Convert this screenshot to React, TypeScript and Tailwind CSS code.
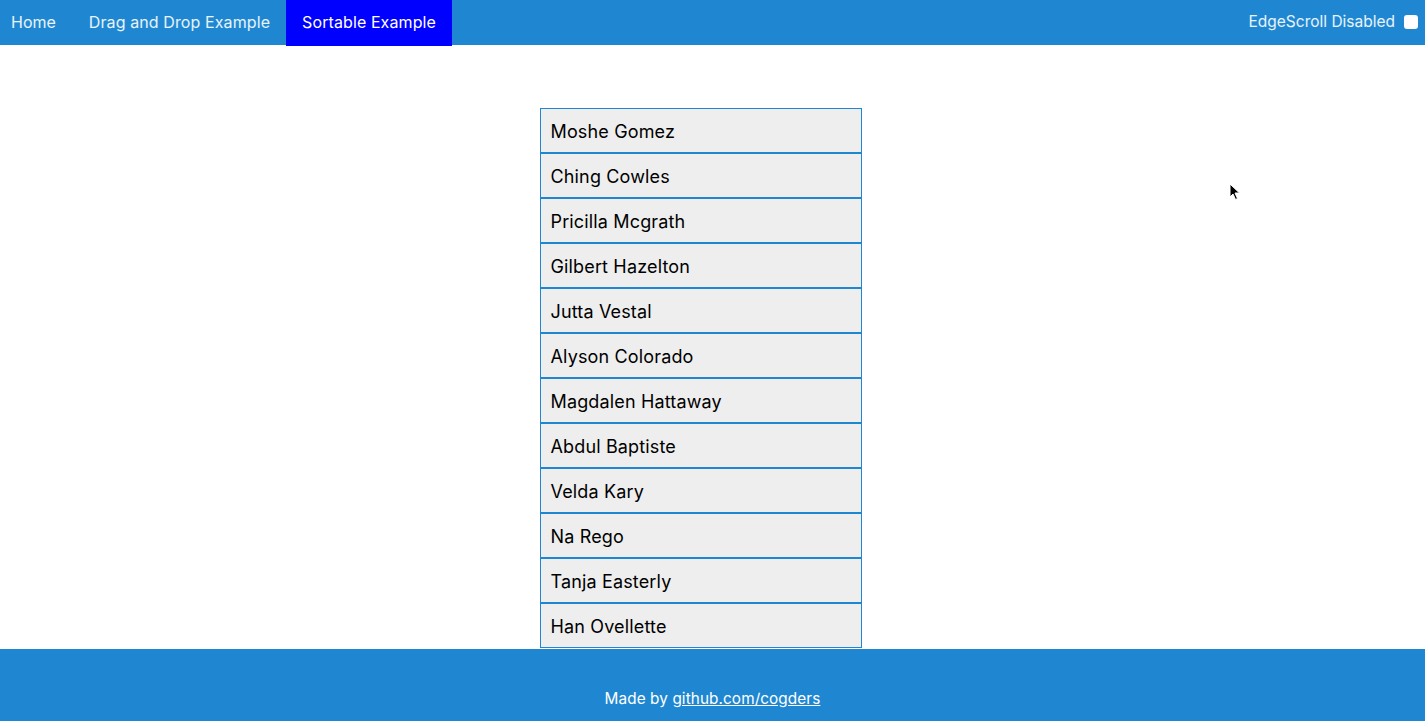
import { useState } from 'react'

const names = [
  'Moshe Gomez',
  'Ching Cowles',
  'Pricilla Mcgrath',
  'Gilbert Hazelton',
  'Jutta Vestal',
  'Alyson Colorado',
  'Magdalen Hattaway',
  'Abdul Baptiste',
  'Velda Kary',
  'Na Rego',
  'Tanja Easterly',
  'Han Ovellette',
]

const font = { fontFamily: 'Inter, "Noto Sans", sans-serif' }

export default function App() {
  const [edge, setEdge] = useState(false)

  return (
    <div className="relative flex h-[721px] flex-col overflow-hidden bg-white" style={font}>
      {/* Barra superior */}
      <header className="flex h-[45px] shrink-0 items-stretch bg-[#1f87d1] text-base">
        <a className="flex items-center pb-px pl-[11px] pr-[17px] text-white/90">Home</a>
        <a className="flex items-center px-4 pb-px tracking-[0.1px] text-white/90">Drag and Drop Example</a>
        <a className="flex h-[46px] items-center bg-[#0000ff] px-4 pb-[3px] tracking-[0.1px] text-white">
          Sortable Example
        </a>
        <label className="ml-auto flex items-center gap-[9px] pb-px pr-[7px] text-[15.5px] text-white/90">
          EdgeScroll {edge ? 'Enabled' : 'Disabled'}
          <input
            type="checkbox"
            checked={edge}
            onChange={(e) => setEdge(e.target.checked)}
            className="h-[14px] w-[14px] appearance-none rounded-[3px] bg-white"
          />
        </label>
      </header>

      {/* Lista ordenable */}
      <main className="flex-1 overflow-hidden pt-[63px]">
        <ul className="mx-auto w-[322px] translate-x-[-12px]">
          {names.map((n) => (
            <li
              key={n}
              className="flex h-[45px] items-center border border-[#1f87d1] bg-[#eeeeee] pl-[10px] pt-[2px] text-[18px] tracking-[0.15px] text-black"
            >
              {n}
            </li>
          ))}
        </ul>
      </main>

      <footer className="h-[72px] shrink-0 bg-[#1f87d1] pt-[39px] text-center text-[15.3px] tracking-[0.1px] text-white">
        Made by <a className="underline">github.com/cogders</a>
      </footer>

      {/* Puntero del ratón */}
      <svg className="absolute left-[1229px] top-[183px]" width="12" height="18" viewBox="0 0 12 18" aria-hidden>
        <path d="M1 1 L1 14 L4 11 L6.5 16.5 L8.5 15.5 L6 10 L10.5 10 Z" fill="#000" stroke="#fff" strokeWidth="1" />
      </svg>
    </div>
  )
}
